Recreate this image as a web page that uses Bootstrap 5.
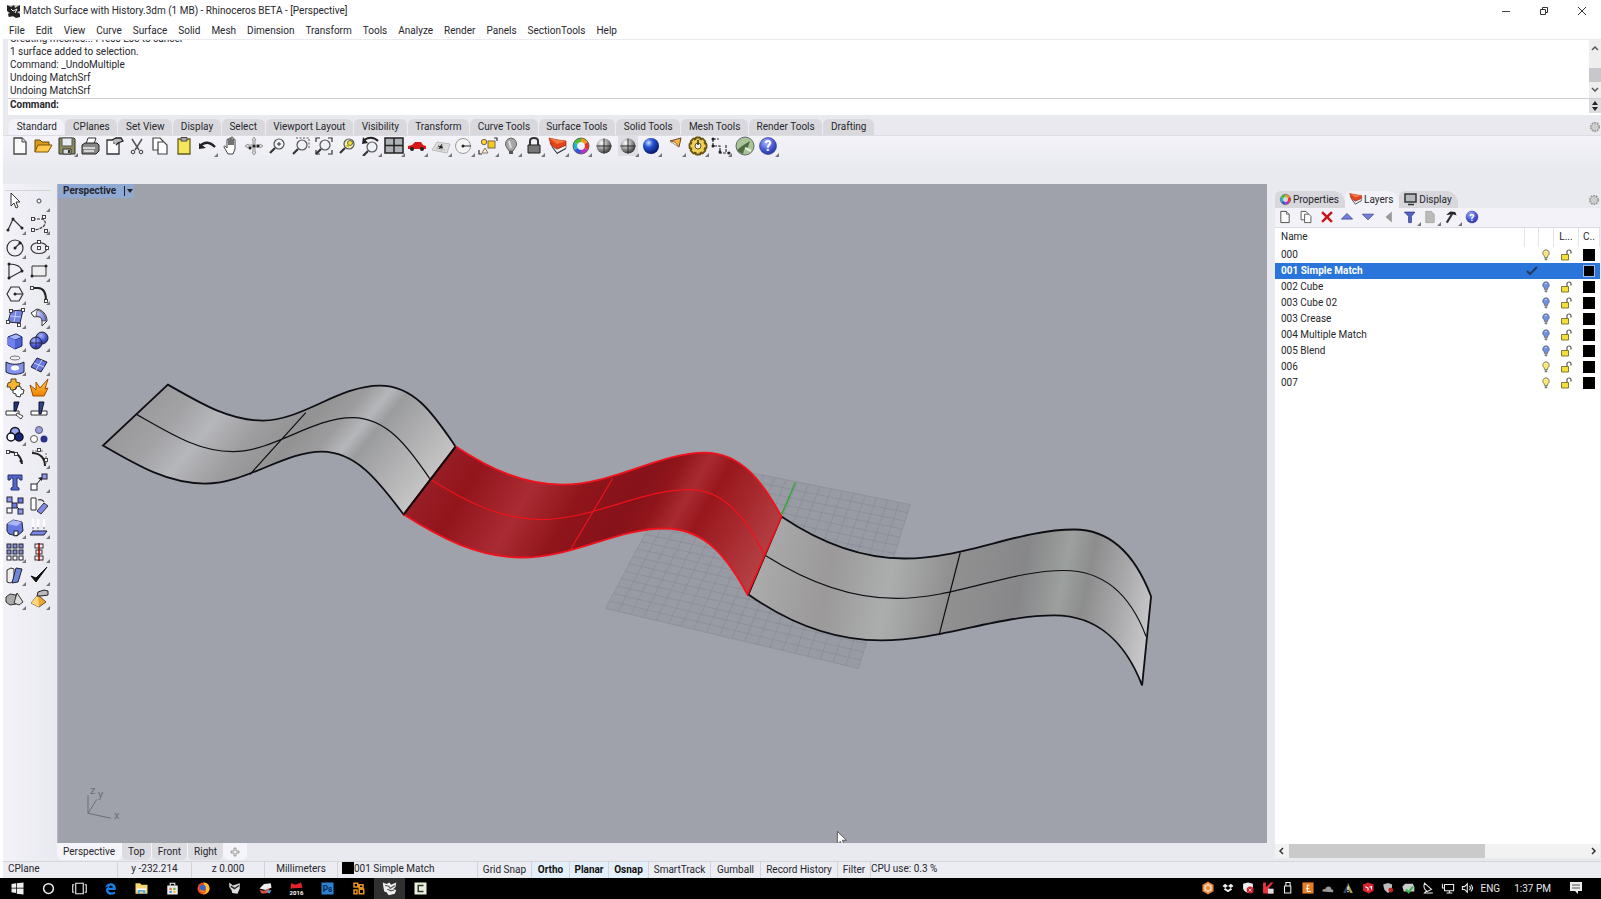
<!DOCTYPE html>
<html lang="en">
<head>
<meta charset="utf-8">
<meta name="viewport" content="width=device-width, initial-scale=1">
<title>Match Surface with History.3dm (1 MB) - Rhinoceros BETA - [Perspective]</title>
<link href="https://cdn.jsdelivr.net/npm/bootstrap@5.3.0/dist/css/bootstrap.min.css" rel="stylesheet">
<style>
:root{--face:#e9e9f0;--edge:#cfcfd8;--ink:#26262c}
body{font:10px/13px Roboto,"Open Sans",sans-serif;color:var(--ink);background:#fff;overflow:hidden}
button,input{font:inherit;color:inherit}
button{border:0;background:none;padding:0}
svg{display:block;flex:none}
.app{padding-left:3px}
.titlebar{height:22px;gap:2px}
.titlebar h1{font-size:10px;line-height:13px}
.wincontrols{gap:28px;padding-right:14px}
.menubar{height:17px;padding-left:6px;gap:11px}
.menubar a{color:inherit;text-decoration:none}
.command{background:var(--face);padding:1px 0 4px 5px}
.history{height:58px;background:#fff;overflow:hidden}
.lines{padding:0 2px 1px}
.vbar{width:12px;background:#eee}
.vthumb{height:14px;background:#c8c8cc}
.prompt{height:17px;border-top:1px solid #d0d0d4;background:#fff}
.prompt label{padding-left:2px;line-height:12px}
.prompt input{border:0;outline:0;background:transparent;height:14px}
.spin{width:12px;background:#dcdce0}
.tabstrip{background:#ebe9f0;height:17px;padding-left:5px;border-bottom:1px solid #dcdce3}
.tabset{width:866px}
.tb{flex:1 0 auto;height:16px;background:#d9d9dd;border-radius:6px 6px 0 0;border-left:1px solid #ececf2}
.tb.on{background:#f2f2f8}
.toolbar{height:48px;background:linear-gradient(#f3f3f9,#e9e9f0 70%);padding:0 0 0 7px}
.toolset{width:768px;height:20px}
.tool{position:relative;width:20px;height:20px;display:block}
.fly::after{content:"";position:absolute;right:-1px;bottom:-1px;border:2px solid #777;border-top-color:transparent;border-left-color:transparent}
.pressed{background:#dedee4}
.work{background:var(--face);min-height:0}
.side{width:54px;padding:6px 6px 0 2px;background:linear-gradient(90deg,#f2f2f8,#e9e9f0)}
.side .rule{border-top:1px solid #d3d3da}
.sidegrid{display:grid;grid-template-columns:24px 24px;grid-template-rows:repeat(18,1fr);height:421px}
.view{background:#9fa1ab;position:relative;border-left:1px solid #b4b5bd;min-height:0}
.viewname{position:absolute;left:0;top:0;width:76px;height:14px;background:#8fa9d3;padding-left:5px;z-index:1}
.vtabs{height:18px}
.vtabs button{height:17px;background:#dcdce1;padding:0 6px;border-radius:0 0 5px 5px;border-right:1px solid #f6f6fa}
.vtabs button.on{background:#f4f4fa}
.dock{width:334px;padding:6px 1px 3px 8px}
.dtabs{height:18px}
.dtabs button{background:#d7d7dc;height:17px;border-radius:6px 12px 0 0;padding:0 6px 0 4px;gap:1px}
.dtabs button.on{background:#f2f2f8}
.dtools{height:20px;background:#f2f2f8;border-bottom:1px solid #dadae2;width:100%;padding-left:3px}
.dtoolset{width:204px}
.dtoolset .tool{height:15px;width:17px}
.list{background:#fff;min-height:0}
.layers{width:100%;table-layout:fixed;border-collapse:collapse}
.layers td,.layers th{padding:0;height:16px;vertical-align:middle;font-weight:400;line-height:14px}
.layers th{height:19px;border-right:1px solid #e4e4ea}
.layers td:first-child,.layers th:first-child{padding-left:6px}
.layers .sel{background:#2a75da;color:#fff}
.layers .sel td{font-weight:700}
.layers svg{margin:auto}
.swatch{width:12px;height:12px;background:#000;display:block}
.sel .swatch{outline:1px solid #9dbbe8;width:10px;height:10px;margin-left:1px}
.hbar{height:14px;background:#f2f2f2}
.hbar .bar{flex:0 0 196px;background:#cacacb}
.status{height:17px;background:#ececf3;border-top:1px solid #d5d5dc;padding-left:1px}
.cell{border-right:1px solid #d3d3da;height:16px;padding:0}
.cell.hot{background:#e3effa;font-weight:700;color:#111}
.taskbar{height:21px;background:#000;color:#e8e8e8;padding-left:2px;margin-left:-3px}
.taskbar .app-btn{width:31px;height:21px}
.app-btn.on{background:#303030}
.clock{gap:14px;padding:0 18px 0 3px}
.clock time{margin-right:4px}
</style>
</head>
<body>
<svg width="0" height="0" class="position-absolute" aria-hidden="true">
<defs>
<radialGradient id="ball" cx=".35" cy=".3" r=".8"><stop offset="0" stop-color="#fff"/><stop offset=".5" stop-color="#999"/><stop offset="1" stop-color="#222"/></radialGradient>
<radialGradient id="blueball" cx=".35" cy=".3" r=".8"><stop offset="0" stop-color="#cfe0ff"/><stop offset=".35" stop-color="#2456d8"/><stop offset="1" stop-color="#020a50"/></radialGradient>
<radialGradient id="helpball" cx=".4" cy=".3" r=".8"><stop offset="0" stop-color="#a9b6ff"/><stop offset=".6" stop-color="#3f51cf"/><stop offset="1" stop-color="#25308c"/></radialGradient>
<linearGradient id="lav"><stop offset="0" stop-color="#d5d9ff"/><stop offset="1" stop-color="#6673d6"/></linearGradient>
<linearGradient id="fire" x2="0" y2="1"><stop offset="0" stop-color="#ffd34d"/><stop offset="1" stop-color="#f08000"/></linearGradient>
<symbol id="page" viewBox="0 0 20 20"><path d="M4 2h8l4 4v12H4z" fill="#fafafa" stroke="#444" stroke-width="1.3"/><path d="M12 2v4h4" fill="#ddd" stroke="#444"/></symbol>
<symbol id="pages" viewBox="0 0 20 20"><path d="M3 2h7l3 3v9H3z" fill="#fff" stroke="#444" stroke-width="1.2"/><path d="M8 6h6l3 3v9H8z" fill="#fff" stroke="#444" stroke-width="1.2"/></symbol>
<symbol id="layersic" viewBox="0 0 20 20"><path d="M3 10l6 8 9-5v-3l-9 4z" fill="#1c2a48"/><path d="M2 7l7 6 9-4v3l-9 5z" fill="#f5f5f5" stroke="#333" stroke-width=".6"/><path d="M1 2l9 2 8 1v4l-9 4-6-4z" fill="#e2441c" stroke="#a01f08" stroke-width=".7"/><path d="M1 2l8 6 9-3-8-1z" fill="#f3793f"/></symbol>
<symbol id="wheel" viewBox="0 0 20 20"><g fill="none" stroke-width="4"><path d="M10 4a6 6 0 0 1 5.200 3" stroke="#f39a1c"/><path d="M15.200 7a6 6 0 0 1 0 6" stroke="#e8352c"/><path d="M15.200 13a6 6 0 0 1-5.200 3" stroke="#c02fc0"/><path d="M10 16a6 6 0 0 1-5.200-3" stroke="#3355e0"/><path d="M4.800 13a6 6 0 0 1 0-6" stroke="#23b6c8"/><path d="M4.800 7a6 6 0 0 1 5.200-3" stroke="#48bf34"/></g><circle cx="10" cy="10" r="8" fill="none" stroke="#555" stroke-width=".8"/></symbol>
<symbol id="help" viewBox="0 0 20 20"><circle cx="10" cy="10" r="8.500" fill="url(#helpball)" stroke="#27318a" stroke-width=".6"/><text x="10" y="15" font-size="14" font-weight="700" fill="#fff" text-anchor="middle">?</text></symbol>
<symbol id="gear" viewBox="0 0 20 20"><circle cx="10" cy="10" r="7" fill="none" stroke="#999" stroke-width="3" stroke-dasharray="3 1.400"/><circle cx="10" cy="10" r="5.500" fill="#ddd" stroke="#999"/><circle cx="10" cy="10" r="2" fill="#f5f5f5" stroke="#999"/></symbol>
<symbol id="bulb" viewBox="0 0 12 12"><path d="M6 .8a3.300 3.300 0 0 0-2 5.900l.6 1.800h2.800l.6-1.800A3.300 3.300 0 0 0 6 .8z" fill="currentColor" stroke="#555" stroke-width=".7"/><path d="M4.700 9.300h2.600v1.900H4.700z" fill="#777"/><path d="M5 3.200c.4-.8 1-.9 1.600-.8" stroke="#fff" fill="none"/></symbol>
<symbol id="lockopen" viewBox="0 0 12 12"><path d="M7 5.500V3a2 2 0 0 1 4 0v1.500" fill="none" stroke="#555" stroke-width="1.200"/><path d="M1.500 5.500h7v5.500h-7z" fill="#f4df3c" stroke="#6b5d12" stroke-width=".8"/></symbol>
<symbol id="rhino" viewBox="0 0 20 20"><path d="M1 2l5 2 4-2 2 3 7-3-1 6-3 3 4 1-2 5-8 2-3-4-3-1-1-5z" fill="currentColor"/><path d="M4 6l5 1 2 3 6-4M7 11l5 2 4-1" fill="none" stroke="#555" stroke-width="1.600"/></symbol>
</defs>
</svg>

<main class="app d-flex flex-column vh-100">
<header class="titlebar d-flex align-items-center">
  <svg class="ms-1" width="14" height="14" viewBox="0 0 14 14"><path d="M1 1h12v12H1z" fill="#ccc"/><path d="M0 1l4 2 3-2 1 3 5-3v6l-3 1 3 2v3l-4 1-3-2-4 1-1-3 2-1-3-2z" fill="#222"/><path d="M4 5l2 2 4-2-2 4" stroke="#fff" fill="none"/></svg>
  <h1 class="fw-normal m-0 flex-grow-1">Match Surface with History.3dm (1 MB) - Rhinoceros BETA - [Perspective]</h1>
  <div class="wincontrols d-flex">
    <button aria-label="Minimize"><svg width="10" height="10"><path d="M1 5.500h8" stroke="#444" stroke-width="1"/></svg></button>
    <button aria-label="Restore"><svg width="10" height="10" fill="none" stroke="#333"><path d="M1.500 3.500h5v5h-5zM3.500 3V1.500h5v5H7"/></svg></button>
    <button aria-label="Close"><svg width="10" height="10"><path d="M1 1l8 8M9 1L1 9" stroke="#333"/></svg></button>
  </div>
</header>
<nav class="menubar d-flex align-items-center">
  <a href="#">File</a><a href="#">Edit</a><a href="#">View</a><a href="#">Curve</a><a href="#">Surface</a><a href="#">Solid</a><a href="#">Mesh</a><a href="#">Dimension</a><a href="#">Transform</a><a href="#">Tools</a><a href="#">Analyze</a><a href="#">Render</a><a href="#">Panels</a><a href="#">SectionTools</a><a href="#">Help</a>
</nav>
<section class="command">
  <div class="history d-flex">
    <div class="lines flex-grow-1 d-flex flex-column justify-content-end">
      <div>Creating meshes... Press Esc to cancel</div><div>1 surface added to selection.</div><div>Command: _UndoMultiple</div><div>Undoing MatchSrf</div><div>Undoing MatchSrf</div>
    </div>
    <div class="vbar d-flex flex-column align-items-center pt-1 pb-1">
      <svg width="8" height="8"><path d="M1 6l3-3 3 3" fill="none" stroke="#555" stroke-width="1.500"/></svg>
      <div class="vthumb w-100 mt-auto mb-1"></div>
      <svg width="8" height="8"><path d="M1 2l3 3 3-3" fill="none" stroke="#555" stroke-width="1.500"/></svg>
    </div>
  </div>
  <div class="prompt d-flex align-items-start"><label for="cmd" class="fw-bold">Command:</label><input id="cmd" class="flex-grow-1"><div class="spin d-flex justify-content-center align-items-center"><svg width="10" height="14"><path d="M5 2l3 4H2zM5 12l3-4H2z" fill="#222"/></svg></div></div>
</section>
<div class="tabstrip d-flex justify-content-between align-items-end">
  <div class="tabset d-flex">
    <button class="tb on">Standard</button><button class="tb">CPlanes</button><button class="tb">Set View</button><button class="tb">Display</button><button class="tb">Select</button><button class="tb">Viewport Layout</button><button class="tb">Visibility</button><button class="tb">Transform</button><button class="tb">Curve Tools</button><button class="tb">Surface Tools</button><button class="tb">Solid Tools</button><button class="tb">Mesh Tools</button><button class="tb">Render Tools</button><button class="tb">Drafting</button>
  </div>
  <svg width="12" height="14"><use href="#gear" width="12" height="12"/></svg>
</div>
<div class="toolbar"><div class="toolset d-flex justify-content-between" id="maintools"></div></div>

<div class="work d-flex flex-grow-1">
  <aside class="side flex-shrink-0"><div class="rule"></div><div class="sidegrid" id="sidetools"></div></aside>
  <section class="flex-grow-1 d-flex flex-column">
    <div class="view flex-grow-1">
      <div class="viewname d-flex align-items-center fw-bold">Perspective<button class="ms-auto" aria-label="Viewport menu"><svg width="11" height="12"><path d="M1.500 1v10" stroke="#222"/><path d="M4 4h6l-3 4z" fill="#222"/></svg></button></div>
      <svg width="100%" height="100%" viewBox="58 184 1210 660" preserveAspectRatio="xMidYMid slice">
        <defs>
          <linearGradient id="g1" gradientUnits="userSpaceOnUse" x1="100" y1="445" x2="316" y2="623"><stop offset="0" stop-color="#99999b"/><stop offset=".14" stop-color="#a2a2a5"/><stop offset=".26" stop-color="#b6b7bb"/><stop offset=".4" stop-color="#9d9c9e"/><stop offset=".52" stop-color="#939293"/><stop offset=".61" stop-color="#9c9c9e"/><stop offset=".68" stop-color="#b6b7ba"/><stop offset=".73" stop-color="#9b9c9e"/><stop offset=".84" stop-color="#adadaf"/><stop offset="1" stop-color="#c6c6c6"/></linearGradient>
          <linearGradient id="g2" gradientUnits="userSpaceOnUse" x1="431" y1="453" x2="733" y2="629"><stop offset="0" stop-color="#9a2028"/><stop offset=".14" stop-color="#93151c"/><stop offset=".3" stop-color="#aa2b33"/><stop offset=".43" stop-color="#90151b"/><stop offset=".56" stop-color="#86121a"/><stop offset=".63" stop-color="#8f151b"/><stop offset=".7" stop-color="#a82b31"/><stop offset=".76" stop-color="#98171d"/><stop offset=".88" stop-color="#a92c31"/><stop offset="1" stop-color="#b64548"/></linearGradient>
          <linearGradient id="g3" gradientUnits="userSpaceOnUse" x1="765" y1="526" x2="1162" y2="607"><stop offset="0" stop-color="#ababac"/><stop offset=".18" stop-color="#9b999a"/><stop offset=".33" stop-color="#acaeae"/><stop offset=".47" stop-color="#929192"/><stop offset=".65" stop-color="#878789"/><stop offset=".75" stop-color="#9ca09e"/><stop offset=".81" stop-color="#8d8d8e"/><stop offset=".9" stop-color="#a9a9ab"/><stop offset="1" stop-color="#d0d0d2"/></linearGradient>
        </defs>
        <path d="M685 460L911 505L859 669L606 609z" fill="#989ba3"/>
        <path id="gridlines" fill="none" stroke="#868a93" stroke-width=".6"/>
        <path d="M796 483L781 518" stroke="#3aa53c" stroke-width="1.600"/>
        <g fill="none" stroke="#0d0f14" stroke-width="1.200">
          <path fill="url(#g3)" stroke-width="1.800" d="M782 517C822 544 862 559 905 559C966 559 1019 530 1075 530C1116 530 1139 563 1152 597L1143 686C1128 647 1101 616 1055 616C997 616 943 641 882 641C833 641 790 624 749 595z"/>
          <path d="M766 556C807 582 850 599 897 599C956 599 1009 571 1065 571C1108 571 1133 600 1147 637M961 553L940 635"/>
          <path fill="url(#g1)" stroke-width="1.800" d="M168 385C203 405 230 421 263 421C302 421 339 386 380 386C415 386 434 415 456 447L404 515C381 485 358 452 322 452C284 452 247 484 205 484C169 484 139 467 103 446z"/>
          <path d="M137 415C172 435 199 452 233 452C274 452 312 418 353 418C387 418 409 448 430 479M306 413L250 475"/>
        </g>
        <g fill="none" stroke="#f0121c" stroke-width="1.200">
          <path fill="url(#g2)" stroke-width="1.800" d="M456 447C491 470 524 485 563 485C614 485 660 453 705 453C742 453 763 482 782 517L748 595C729 560 707 529 665 529C617 529 574 558 522 558C478 558 440 538 404 515z"/>
          <path d="M431 480C466 502 501 520 542 520C593 520 641 490 690 490C725 490 747 519 765 555M613 479L571 550"/>
        </g>
        <path d="M456 447L404 515" stroke="#0b0b0f" stroke-width="2"/>
        <g stroke="#6c6e77" fill="none"><path d="M88 796V814L111 819M88 814L97 800"/></g>
        <g fill="#6c6e77" font-size="11"><text x="90" y="795">z</text><text x="98" y="799">y</text><text x="114" y="820">x</text></g>
        <path d="M838 832v13l3-3 2 5 2-1-2-5h4z" fill="#fff" stroke="#444" stroke-width=".8"/>
      </svg>
    </div>
    <div class="vtabs d-flex"><button class="on">Perspective</button><button>Top</button><button>Front</button><button>Right</button><button class="on" aria-label="New viewport"><svg width="10" height="10"><path d="M4 1h2v3h3v2H6v3H4V6H1V4h3z" fill="#eee" stroke="#888" stroke-width=".8"/></svg></button></div>
  </section>
  <aside class="dock flex-shrink-0 d-flex flex-column">
    <div class="dtabs d-flex align-items-end">
      <button class="d-flex align-items-center"><svg width="13" height="13"><use href="#wheel"/></svg>Properties</button>
      <button class="on d-flex align-items-center"><svg width="14" height="14"><use href="#layersic"/></svg>Layers</button>
      <button class="d-flex align-items-center"><svg width="15" height="14"><path d="M2 2h11v8H2z" fill="#b5b8bd" stroke="#333" stroke-width="1.500"/><path d="M5 12.500h6" stroke="#333" stroke-width="1.500"/></svg>Display</button>
      <svg class="ms-auto" width="12" height="14"><use href="#gear" width="12" height="12"/></svg>
    </div>
    <div class="dtools d-flex align-items-center"><div class="dtoolset d-flex justify-content-between" id="docktools"></div></div>
    <div class="list flex-grow-1">
      <table class="layers">
        <colgroup><col><col width="14"><col width="15"><col width="25"><col width="21"></colgroup>
        <thead><tr><th>Name</th><th></th><th></th><th class="text-center">L...</th><th class="ps-1">C..</th></tr></thead>
        <tbody>
          <tr><td>000</td><td></td><td><svg width="12" height="12" style="color:#f8e27a"><use href="#bulb"/></svg></td><td><svg width="12" height="12"><use href="#lockopen"/></svg></td><td><span class="swatch ms-1"></span></td></tr>
          <tr class="sel"><td>001 Simple Match</td><td><svg width="12" height="10"><path d="M1 5l3 3 7-7" fill="none" stroke="#223a5c" stroke-width="2"/></svg></td><td></td><td></td><td><div class="ps-1"><span class="swatch"></span></div></td></tr>
          <tr><td>002 Cube</td><td></td><td><svg width="12" height="12" style="color:#6f90e6"><use href="#bulb"/></svg></td><td><svg width="12" height="12"><use href="#lockopen"/></svg></td><td><span class="swatch ms-1"></span></td></tr>
          <tr><td>003 Cube 02</td><td></td><td><svg width="12" height="12" style="color:#6f90e6"><use href="#bulb"/></svg></td><td><svg width="12" height="12"><use href="#lockopen"/></svg></td><td><span class="swatch ms-1"></span></td></tr>
          <tr><td>003 Crease</td><td></td><td><svg width="12" height="12" style="color:#6f90e6"><use href="#bulb"/></svg></td><td><svg width="12" height="12"><use href="#lockopen"/></svg></td><td><span class="swatch ms-1"></span></td></tr>
          <tr><td>004 Multiple Match</td><td></td><td><svg width="12" height="12" style="color:#6f90e6"><use href="#bulb"/></svg></td><td><svg width="12" height="12"><use href="#lockopen"/></svg></td><td><span class="swatch ms-1"></span></td></tr>
          <tr><td>005 Blend</td><td></td><td><svg width="12" height="12" style="color:#6f90e6"><use href="#bulb"/></svg></td><td><svg width="12" height="12"><use href="#lockopen"/></svg></td><td><span class="swatch ms-1"></span></td></tr>
          <tr><td>006</td><td></td><td><svg width="12" height="12" style="color:#f8e96a"><use href="#bulb"/></svg></td><td><svg width="12" height="12"><use href="#lockopen"/></svg></td><td><span class="swatch ms-1"></span></td></tr>
          <tr><td>007</td><td></td><td><svg width="12" height="12" style="color:#f8e96a"><use href="#bulb"/></svg></td><td><svg width="12" height="12"><use href="#lockopen"/></svg></td><td><span class="swatch ms-1"></span></td></tr>
        </tbody>
      </table>
    </div>
    <div class="hbar d-flex align-items-stretch"><svg width="14" height="14"><path d="M8 4L5 7l3 3" fill="none" stroke="#333" stroke-width="1.500"/></svg><div class="bar"></div><svg class="ms-auto" width="14" height="14"><path d="M6 4l3 3-3 3" fill="none" stroke="#333" stroke-width="1.500"/></svg></div>
  </aside>
</div>

<footer class="status d-flex">
  <div class="cell ps-1" style="width:114px">CPlane</div><div class="cell text-center" style="width:74px">y -232.214</div><div class="cell text-center" style="width:73px">z 0.000</div><div class="cell text-center" style="width:73px">Millimeters</div>
  <div class="cell d-flex ps-1" style="width:140px"><span class="swatch"></span>001 Simple Match</div>
  <button class="cell" style="width:54px">Grid Snap</button><button class="cell hot" style="width:38px">Ortho</button><button class="cell hot" style="width:39px">Planar</button><button class="cell hot" style="width:40px">Osnap</button><button class="cell" style="width:62px">SmartTrack</button><button class="cell" style="width:50px">Gumball</button><button class="cell" style="width:77px">Record History</button><button class="cell" style="width:33px">Filter</button><div>CPU use: 0.3 %</div>
</footer>
<nav class="taskbar d-flex align-items-center">
  <div class="d-flex" id="tasks"></div>
  <div class="d-flex align-items-center ms-auto" id="tray"></div>
  <div class="clock d-flex align-items-center"><span>ENG</span><time>1:37 PM</time><button aria-label="Notifications"><svg width="14" height="14"><path d="M1 1h12v9H9v3l-3-3H1z" fill="#eee"/><path d="M3 4h8M3 7h8" stroke="#555"/></svg></button></div>
</nav>
</main>
<script src="https://cdn.jsdelivr.net/npm/bootstrap@5.3.0/dist/js/bootstrap.bundle.min.js"></script>
<script>
// Each entry: [label, svg markup on a 20x20 grid, flags]; f = fly-out corner, p = pressed
const K='fill="none" stroke="#333" stroke-width="1.200"';
const sq=(x,y,f='#fff',s=5)=>`<rect x="${x}" y="${y}" width="${s}" height="${s}" fill="${f}" stroke="#223" stroke-width="1"/>`;
const dot=(x,y)=>`<circle cx="${x}" cy="${y}" r="1.500" fill="#222"/>`;
const node=(x,y)=>`<rect x="${x-1.5}" y="${y-1.5}" width="3" height="3" fill="#fff" stroke="#333" stroke-width=".9"/>`;
const lens=(x=12,y=8,c='#eef2f6')=>`<path d="M${x-4} ${y+4}L${x-9} ${y+9}" stroke="#333" stroke-width="2.200"/><circle cx="${x}" cy="${y}" r="5" fill="${c}" stroke="#555" stroke-width="1.200"/>`;
const use=n=>`<use href="#${n}"/>`;
const shade='<circle cx="10" cy="10" r="7.500" fill="url(#ball)"/><path d="M10 2.500v15M2.500 10h15" stroke="#222" stroke-width=".9"/>';
const teeth=[0,45,90,135].map(a=>`<rect x="1.500" y="7.500" width="17" height="5" rx="1" transform="rotate(${a} 10 10)"/>`).join('');
const main=[
['New',use('page')],
['Open','<path d="M2 16V4h5l2 2h7v3" fill="#d99a1e" stroke="#6b4a08"/><path d="M2 16l3-7h14l-4 7z" fill="#ffc84a" stroke="#7a5508"/>'],
['Save','<path d="M2 2h15l1 1v15H2z" fill="#8b8c58" stroke="#333"/><path d="M5 2h10v8H5z" fill="#e6eef2" stroke="#555"/><path d="M6 13h8v5H6z" fill="#ddd" stroke="#333"/><path d="M11 14h2v3h-2z" fill="#333"/>','f'],
['Print','<path d="M6 8l2-6h8l-2 6z" fill="#fff" stroke="#333"/><path d="M2 9l3-2h12l2 2v6l-3 3H2z" fill="#888" stroke="#222"/><path d="M3 12h12M4 15h10" stroke="#eee" stroke-width="1.300"/>'],
['Document properties','<path d="M3 4h7v3h5v11H3z" fill="#fafafa" stroke="#333" stroke-width="1.300"/><path d="M8 4l4-2h5l2 3-5 2-2 2" fill="#bbb" stroke="#222" stroke-width="1.300"/>'],
['Cut','<path d="M5 3l7 11M15 3L8 14" stroke="#555" stroke-width="1.500"/><circle cx="6" cy="16" r="1.800" fill="none" stroke="#333"/><circle cx="14" cy="16" r="1.800" fill="none" stroke="#333"/>'],
['Copy',use('pages')],
['Paste','<path d="M4 3h12v15H4z" fill="#f5e55a" stroke="#665c20" stroke-width="1.300"/><path d="M7 1.500h6V5H7z" fill="#aaa" stroke="#444"/>'],
['Undo','<path d="M3 10c5-5 10-4 15 1" fill="none" stroke="#222" stroke-width="2.300"/><path d="M2 7l7 5-7 1z" fill="#222"/>','f'],
['Pan','<path d="M6 18l-4-7c0-2 2-1 3 1V4c0-1.500 2-1.500 2 0v5-6c0-1.500 2-1.500 2 0v6-7c0-1.500 2-1.500 2 0v7-5c0-1.500 2-1.500 2 0v9l-2 5z" transform="translate(2)" fill="#fff" stroke="#444" stroke-width="1"/>'],
['Rotate view','<path d="M10 1l2 3h-1v5h5V8l3 2-3 2v-1h-5v5h1l-2 3-2-3h1v-5H4v1l-3-2 3-2v1h5V4H8z" fill="#ddd" stroke="#888" stroke-width=".8"/>'+dot(10,10)+dot(6,12)+dot(14,10)],
['Zoom dynamic',lens()+'<path d="M10 8h4M12 6v4" stroke="#333"/>'],
['Zoom window','<path d="M5 2h13v10" fill="none" stroke="#555" stroke-dasharray="2 1.500"/>'+lens(11,9)],
['Zoom extents',lens(11,9)+'<path d="M2 6V2h4M14 2h4v4M18 14v4h-4M2 14v4h4" '+K+'/>'],
['Zoom selected',lens(12,8,'#f4f4c0')+'<circle cx="13" cy="7" r="2.500" fill="#f4e226" stroke="#665"/><path d="M8 9h4v3z" fill="#d9c000"/>'],
['Undo view change',lens(11,11)+'<path d="M3 4c5-3 10-3 14 1" fill="none" stroke="#222" stroke-width="2"/><path d="M2 1l5 6-6 1z" fill="#222"/>','f'],
['Four viewports','<path d="M1 2h18v15H1z" fill="#aeb1b6" stroke="#222" stroke-width="1.500"/><path d="M10 2v15M1 9.500h18" stroke="#222" stroke-width="1.500"/>','f'],
['Named views','<path d="M1 10l4-1 3-3h6l2 3 3 1v3H1z" fill="#d81818"/><circle cx="5" cy="13" r="2" fill="#222"/><circle cx="15" cy="13" r="2" fill="#222"/>','f'],
['Construction plane','<path d="M1 14L6 6l13 2-3 9z" fill="#ddd" stroke="#bbb"/><path d="M5 12l9 2M8 8l-2 6M12 9l-2 6" stroke="#bbb"/><path d="M7 10l5 2M11 8l-3 5" stroke="#333"/>'+dot(10,11),'f'],
['Circle','<circle cx="9" cy="10" r="7.500" fill="#f4f4f4" stroke="#999"/><path d="M9 10h8" stroke="#333"/>'+dot(9,10),'f'],
['Select','<path d="M16 2h3v3M1 14v4h3" '+K+'/><circle cx="6" cy="6" r="2.700" fill="#f9d22c" stroke="#765"/><rect x="10" y="5" width="7" height="7" fill="#f9c81c" stroke="#765"/><path d="M7 12l3 5H4z" fill="#fff0d0" stroke="#876"/>','f'],
['Hide','<path d="M10 2a6 6 0 0 0-4 10l2 3h4l2-3a6 6 0 0 0-4-10z" fill="#a6a6a6" stroke="#666"/><path d="M8 15h4v3H8z" fill="#555"/><path d="M8 5l2 7" stroke="#ddd" stroke-width="2"/>','f'],
['Lock','<path d="M6 9V5c0-4 8-4 8 0v4" fill="none" stroke="#333" stroke-width="2"/><path d="M4 9h12v8H4z" fill="#777" stroke="#222"/>','f'],
['Layers',use('layersic'),'f'],
['Colour',use('wheel'),'f'],
['Shade',shade],
['Shaded display',shade,'fp'],
['Render','<circle cx="10" cy="10" r="8" fill="url(#blueball)"/>','f'],
['Spotlight','<path d="M5 5l11-3-2 9z" fill="#f6b73c" stroke="#643"/><path d="M5 5l5 1 4 5" fill="#fff6c0" stroke="#964"/>','f'],
['Options','<g fill="#efcf58" stroke="#66540e" stroke-width="1.800">'+teeth+'</g><circle cx="10" cy="10" r="6.500" fill="#efcf58"/><circle cx="10" cy="10" r="3" fill="#eee" stroke="#66540e"/><path d="M10 4v5" stroke="#333" stroke-width="1.500"/>','f'],
['Dimension','<path d="M2 3h6M2 3v7h7v7h9M15 9v8" '+K+' stroke-dasharray="3 1"/>'+dot(2,3)+dot(2,10)+dot(9,16)+dot(18,17),'f'],
['Grasshopper','<circle cx="10" cy="10" r="9" fill="#a9c498" stroke="#666"/><path d="M2 14l5-4 8-5-2 6-4 3-1 4-4-2z" fill="#4e6b44"/><path d="M10 12l6 3" stroke="#e4f0dc" stroke-width="2"/>'],
['Help',use('help'),'f']];
const side=[
['Select','<path d="M6 2v13l3-3 2 5 2-1-2-5h4z" fill="#fff" stroke="#333"/>'],
['Point','<circle cx="10" cy="10" r="2" fill="#fff" stroke="#444"/>','f'],
['Polyline','<path d="M3 16L8 5l9 9" '+K+'/>'+dot(3,16)+dot(8,5)+dot(17,14),'f'],
['Curve','<path d="M4 5h9c6 2 4 10-9 11" '+K+' stroke-dasharray="3 1"/>'+node(4,5)+node(15,3)+node(4,16)+node(17,17),'f'],
['Circle','<circle cx="10" cy="10" r="8" '+K+'/><path d="M10 10l5-5" '+K+'/>'+dot(10,10)+dot(15,5),'f'],
['Ellipse','<ellipse cx="10" cy="10" rx="8" ry="5.500" '+K+'/>'+node(10,4)+node(10,10)+node(18,10),'f'],
['Arc','<path d="M4 3c8 0 12 3 13 7L4 17z" '+K+'/>'+dot(4,3)+dot(17,10)+dot(4,17),'f'],
['Rectangle','<path d="M3 5h14v10H3z" fill="#eee" stroke="#333"/>'+dot(3,15)+dot(17,5),'f'],
['Polygon','<path d="M6 3h8l4 7-4 7H6l-4-7z" '+K+'/><path d="M10 10h7" '+K+'/>'+dot(10,10),'f'],
['Fillet curves','<path d="M3 4h6c6 0 8 5 8 13" fill="none" stroke="#222" stroke-width="2"/>'+node(3,4)+node(17,17),'f'],
['Surface from points','<path d="M6 3l12-1-3 13-12-1z" fill="#7484df" stroke="#224"/><path d="M5 8l11 1M11 3l-2 11" stroke="#c5ccff"/>'+node(6,3)+node(18,2)+node(3,14)+node(14,17),'f'],
['Sweep','<path d="M2 5l6-4c6 1 10 6 10 12l-5 5v-5c0-4-4-5-8-4z" fill="#fff" stroke="#333"/><path d="M8 2c6 1 9 6 9 11l-4 0c0-4-3-5-6-5z" fill="url(#lav)" stroke="#333" stroke-width=".7"/>','f'],
['Box','<path d="M3 6l8-3 6 3v9l-7 3-7-4z" fill="#4c62d6" stroke="#1d2768"/><path d="M3 6l8-3 6 3-7 3z" fill="#a9b6ff" stroke="#1d2768" stroke-width=".7"/><path d="M3 6l7 3v9l-7-4z" fill="#6f82ee"/>','f'],
['Boolean union','<circle cx="13" cy="7" r="6" fill="url(#helpball)" stroke="#223"/><circle cx="7" cy="12" r="6" fill="url(#helpball)" stroke="#223"/><path d="M1 12h12M7 6v12" stroke="#223" stroke-width=".8"/>','f'],
['Project','<ellipse cx="10" cy="3" rx="5" ry="2" fill="none" stroke="#777"/><path d="M1 7c5 3 13 3 18 0v10c-5 3-13 3-18 0z" fill="#8492ef" stroke="#223"/><ellipse cx="10" cy="13" rx="4" ry="2.500" fill="#fff"/>','f'],
['Patch','<path d="M2 12L8 3l10 4-6 10z" fill="#6576dc" stroke="#223"/><path d="M5 8l10 4M13 5L7 15" stroke="#c9d0ff"/>','f'],
['Join','<path d="M3 5l3-1 0-3 5 0 0 3 4 1-1 4-3 0-1 3-4 0-1-3-3 0z" fill="#f5b52c" stroke="#543"/><path d="M8 12l3-1 1-3 4 1 0 2 3 1-1 4-2 0-1 3-4-1 0-2-3-1z" fill="#fff" stroke="#333"/>'],
['Explode','<path d="M4 18L1 7l6 5 0-8 4 6 8-9-3 10 3-1-4 8z" fill="url(#fire)" stroke="#a04c00"/>'],
['Trim','<path d="M1 10h13v4H1z" fill="#fff" stroke="#333"/><path d="M9 1h5l-3 9H9z" fill="#1f3585" stroke="#112"/><path d="M12 12l6 3-2 3-5-4z" fill="#fff" stroke="#444"/>'],
['Split','<path d="M2 10h16v4H2z" fill="#fff" stroke="#333"/><path d="M10 1h5l-3 12h-2z" fill="#2c458f" stroke="#112"/>'],
['Group','<circle cx="10" cy="7" r="4.500" fill="#9aa4f0" stroke="#112" stroke-width="1.500"/><circle cx="6" cy="12" r="4" fill="#fff" stroke="#112" stroke-width="1.500"/><circle cx="14" cy="12" r="4" fill="#18257b" stroke="#112" stroke-width="1.500"/>','f'],
['Ungroup','<circle cx="10" cy="5" r="3.500" fill="#9ba2d9" stroke="#557"/><circle cx="5" cy="14" r="3.500" fill="#fff" stroke="#555"/><circle cx="15" cy="14" r="3.500" fill="#27308d"/>'],
['Edit points','<path d="M3 4c7-1 13 3 14 12" fill="none" stroke="#222" stroke-width="2"/>'+node(3,4)+node(11,6)+dot(16,13)],
['Control points','<path d="M3 5c8 0 13 5 13 13" fill="none" stroke="#222" stroke-width="2"/><path d="M3 3h12M17 5v12" stroke="#777" stroke-dasharray="2 1"/>'+node(10,2)+node(17,12),'f'],
['Text','<path d="M3 3h14v5h-2l-1-2h-2v9l2 1v2H6v-2l2-1V6H6L5 8H3z" fill="#5266cb" stroke="#26336f"/>'],
['Move','<path d="M7 13l5-6" stroke="#222"/><path d="M13 5v4l-4-3z" fill="#222"/>'+sq(2,12,'#fff',6)+sq(13,2,'#8c99ee',5),'f'],
['Copy objects','<path d="M5 5l10 10" stroke="#333"/>'+sq(2,2,'#8c99ee')+sq(13,3,'#6c7be0')+sq(7,8,'#6c7be0')+sq(2,13)+sq(13,14,'#8c99ee')],
['Rotate','<path d="M2 3h5v12H2z" fill="#fff" stroke="#333"/><path d="M9 5c3-1 5 0 6 2" '+K+'/><path d="M8 16l7-8 4 3-7 8z" fill="#7d8be6" stroke="#333"/>'],
['Fillet edges','<path d="M2 6l6-4 9 2 1 9-6 5-8-2-2-3z" fill="#6679df" stroke="#223"/><path d="M2 6l6-4 9 2-5 4z" fill="#aab5fa"/><path d="M9 13h4v4l-4 1z" fill="#fff" stroke="#222"/>','f'],
['Loft','<path d="M4 1v10M9 1v10M15 1v10" stroke="#fff" stroke-width="2.500"/><path d="M1 17l3-4h14l-3 4z" fill="#7a8aea" stroke="#223"/><path d="M4 9v6M9 9v6M15 9v6" stroke="#557" stroke-dasharray="2 1"/>','f'],
['Array',[2,8,14].map(y=>[2,8,14].map(x=>sq(x,y,y==14?'#fff':'#8591cf',4)).join('')).join(''),'f'],
['Align','<path d="M10 1v18" stroke="#d22" stroke-width="2"/><rect x="6" y="2" width="8" height="4" fill="none" stroke="#333"/><rect x="7" y="8" width="6" height="4" fill="none" stroke="#333"/><rect x="6" y="14" width="8" height="4" fill="none" stroke="#333"/>','f'],
['Unroll','<path d="M2 5l4-2 3 1v12l-4 2-3-1z" fill="#eee" stroke="#333"/><path d="M11 3l6 1-4 13-6 1z" fill="#6f86dd" stroke="#223"/>','f'],
['Check','<path d="M2 11l5 6L18 2 7 13z" fill="#111" stroke="#111"/>','f'],
['Mesh','<path d="M1 8l4-3 6 1v9l-6 1-4-3z" fill="#aaa" stroke="#333"/><path d="M12 4l6 9-4 3-5-2z" fill="#ddd" stroke="#333"/>','f'],
['Drafting','<path d="M2 14l7-8 8 7-7 5z" fill="#eea52e" stroke="#653"/><path d="M2 14l7-8 1 12z" fill="#ffd77c"/><path d="M9 3l6-2 4 1v4l-7 1-4 0z" fill="#bbb" stroke="#222"/>','f']];
const dock=[
['New layer',use('page')],['New sublayer',use('pages')],
['Delete','<path d="M3 3l14 14M17 3L3 17" stroke="#c3151a" stroke-width="3.500"/>'],
['Move up','<path d="M2 13l8-8 8 8z" fill="#7482dd" stroke="#28327e"/>'],
['Move down','<path d="M2 6l8 8 8-8z" fill="#7482dd" stroke="#28327e"/>'],
['Move left','<path d="M14 2v16L5 10z" fill="#999"/>'],
['Filter','<path d="M2 3h15l-5 6v9H8V9z" fill="#5264c7" stroke="#27307a"/>','f'],
['Report','<path d="M4 2h8l4 4v12H4z" fill="#bbb" stroke="#999"/>','f'],
['Tools','<path d="M3 7l6-5 7 1 2 5-5-2z" fill="#222"/><path d="M12 5L4 18" stroke="#333" stroke-width="3"/>','f'],
['Help',use('help')]];
const W='fill="none" stroke="#eee" stroke-width="1.500"';
const apps=[
['Start','<path d="M2 4l6-1v6H2zM9 3l9-1v7H9zM2 10h6v6l-6-1zM9 10h9v8l-9-1z" fill="#eee"/>'],
['Search','<circle cx="10" cy="10" r="6.500" fill="none" stroke="#eee" stroke-width="2"/>'],
['Task view','<path d="M5 3h10v14H5zM3 5H1v10h2M17 5h2v10h-2" '+W+'/>'],
['Edge','<path d="M3 9C5 1 17 1 17 10v2H7c1 4 6 4 9 2v3c-6 3-12 1-12-5 0-2 2-4 4-5-2 0-4 1-5 2zM8 9h5c0-4-5-4-5 0z" fill="#1681e8"/>'],
['Explorer','<path d="M2 3h6l2 2h8v12H2z" fill="#f7d772"/><path d="M4 10h12v3H4z" fill="#fff"/><path d="M5 12h10v5h-3v-3H8v3H5z" fill="#55aee6"/>'],
['Store','<path d="M3 6h14v12H3z" fill="#eee"/><path d="M7 6V3h6v3" '+W+'/><path d="M6 9h3v3H6z" fill="#e64"/><path d="M11 9h3v3h-3z" fill="#6b3"/><path d="M6 13h3v3H6z" fill="#39e"/><path d="M11 13h3v3h-3z" fill="#fb2"/>'],
['Firefox','<circle cx="10" cy="10" r="8" fill="#e8491d"/><path d="M10 2c6 0 8 4 8 9-1 4-5 8-10 6 5 0 7-5 4-8z" fill="#ffbe2d"/><circle cx="9" cy="9" r="4" fill="#3d64c9"/><path d="M5 10c2 4 6 4 8 2-1 4-8 4-8-2z" fill="#ff9a1e"/>'],
['Viewer','<path d="M3 2l5 4 9-3v7l-3 7-7-1-1-4-3-4z" fill="#ddd"/><path d="M5 7l5 3 6-4" stroke="#333" stroke-width="2" fill="none"/>'],
['Browser','<path d="M2 10l6-6 9-1 1 6-8 3z" fill="#eee"/><path d="M2 12l6 1 8-4-3 7-8 1z" fill="#d7504a"/><path d="M11 13l7-1-3 5z" fill="#58a9dd"/>'],
['Converter 2016','<path d="M3 3l6 2 7-3 2 7-16 1z" fill="#e3232e"/><text x="10" y="18" font-size="8" font-weight="700" text-anchor="middle" fill="#fff">2016</text>'],
['Photoshop','<path d="M2 2h16v16H2z" fill="#2c82d2"/><text x="10" y="14" font-size="11" font-weight="700" text-anchor="middle" fill="#062a58">Ps</text>'],
['Bridge','<path d="M4 3h5v5H4zM11 5h5v4h-5zM4 12h4v5H4zM11 11h6v6h-6z" fill="none" stroke="#e8931c" stroke-width="2"/>'],
['Rhinoceros','<g color="#eee">'+use('rhino')+'</g>','o'],
['Camtasia','<path d="M2 2h16v16H2z" fill="#e8f2da"/><path d="M14 6H7v8h7" fill="none" stroke="#333" stroke-width="2"/>']];
const icons=[
['Package','<path d="M10 2l7 4v8l-7 4-7-4V6z" fill="#f6c9a0" stroke="#e27a2d" stroke-width="2"/><circle cx="10" cy="10" r="3" fill="#ec8c3d"/>'],
['Dropbox','<path d="M6 4l4 3-4 3-4-3zM14 4l4 3-4 3-4-3zM6 10l4 3 4-3 2 2-6 4-6-4z" fill="#eee"/>'],
['Defender','<path d="M3 4l7-2 7 2v6c0 4-4 6-7 7-3-1-7-3-7-7z" fill="#eee"/><circle cx="13" cy="13" r="5" fill="#d2232f"/><path d="M11 11l4 4M15 11l-4 4" stroke="#fff"/>'],
['Antivirus','<path d="M3 2h4v7l7-7h4l-7 8 7 8H3z" fill="#e8343c"/><path d="M10 11h8v7h-8z" fill="#ddd"/>'],
['USB','<path d="M7 7V2h6v5M5 7h9v10H5z" '+W+'/>'],
['Launcher','<path d="M2 2h16v16H2z" fill="#e87d25"/><path d="M12 6H9v9h5M7 11h5" stroke="#fff" fill="none" stroke-width="1.500"/>'],
['OneDrive','<path d="M2 15c0-4 3-4 4-3 1-6 9-5 9 0 4 0 3 4 1 4z" fill="#999"/>'],
['Drive','<path d="M10 3L3 17h4l3-7z" fill="#29466e"/><path d="M10 3l7 14h-4l-3-7z" fill="#a9a03a"/><path d="M9 8h2v5H9zM9 14h2v2H9z" fill="#eee"/>'],
['Cube','<path d="M3 5l7-3 8 3v9l-7 4-8-4z" fill="#d9232f"/><path d="M6 8l4 2v4M12 9l3-1v4" stroke="#fff" fill="none" stroke-width="1.500"/>'],
['Shield','<path d="M3 5l7-2 6 2-1 9-5 3-5-4z" fill="#bbb"/><circle cx="14" cy="13" r="3.500" fill="#c22"/>'],
['Update','<path d="M2 8l4-4h11l2 5v6H4z" fill="#ccc"/><path d="M7 12l4 4 6-8" stroke="#3fbd4c" stroke-width="3" fill="none"/>'],
['Satellite','<path d="M5 3l10 9-6 3c-4-2-6-7-4-12zM8 14l-3 3h12" '+W+'/>'],
['Network','<path d="M5 5h13v9H5zM8 17h8M12 14v3M2 4v6h3" '+W+'/>'],
['Volume','<path d="M2 8h3l4-4v12l-4-4H2zM12 7c2 2 2 4 0 6M14 5c3 3 3 7 0 10" '+W+'/>']];
const btn=(list,size=20,cls='')=>list.map(([n,s,f=''])=>`<button class="tool ${cls} ${f.includes('f')?'fly':''} ${f.includes('p')?'pressed':''}" aria-label="${n}"><svg width="${size}" height="${size}" viewBox="0 0 20 20">${s}</svg></button>`).join('');
const put=(id,html)=>document.getElementById(id).innerHTML=html;
put('maintools',btn(main));
put('sidetools',btn(side));
put('docktools',btn(dock,14));
put('tray',btn(icons,14,'d-flex align-items-center justify-content-center'));
put('tasks',apps.map(([n,s,f])=>`<button class="app-btn d-flex align-items-center justify-content-center ${f?'on':''}" aria-label="${n}"><svg width="15" height="15" viewBox="0 0 20 20">${s}</svg></button>`).join(''));
// Ground grid: 20 x 20 cells spread between the four corners of the construction plane
const A=[685,460],B=[911,505],C=[859,669],D=[606,609],mix=(p,q,t)=>[(p[0]+(q[0]-p[0])*t).toFixed(1),(p[1]+(q[1]-p[1])*t).toFixed(1)];
let d='';
for(let i=0;i<=20;i++){const t=i/20;d+=`M${mix(A,B,t)}L${mix(D,C,t)}M${mix(A,D,t)}L${mix(B,C,t)}`}
document.getElementById('gridlines').setAttribute('d',d);
</script>
</body>
</html>
